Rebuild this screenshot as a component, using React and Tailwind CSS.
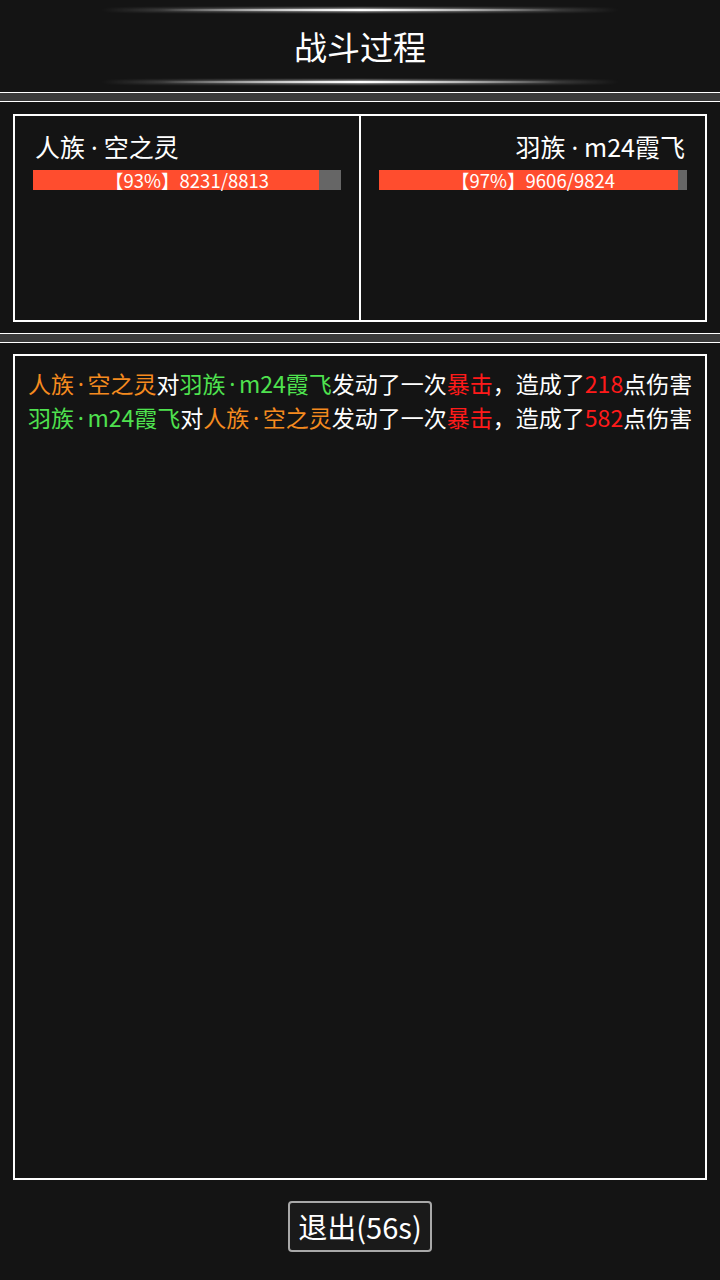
const FONT = { fontFamily: '"Noto Sans CJK SC", "Noto Sans", sans-serif' };

function Dot({ wide }) {
  return (
    <span className={wide ? "mx-[0.24em]" : "mx-[0.16em]"} style={{ fontFamily: '"Noto Sans", sans-serif' }}>
      ·
    </span>
  );
}

function Glow() {
  return (
    <div className="relative mx-auto h-[4px] w-[520px]">
      <div className="absolute inset-0 bg-linear-to-r from-transparent via-white/70 to-transparent blur-[1px]" />
      <div className="absolute inset-x-[60px] top-[1px] h-[2px] bg-linear-to-r from-transparent via-white to-transparent" />
    </div>
  );
}

function Divider() {
  return <div className="h-[10px] border-y border-white bg-[#3a3a3a]" />;
}

function HpBar({ pct, text }) {
  return (
    <div className="relative h-[20px] w-full bg-[#666666]">
      <div className="h-full bg-[#ff4d2e]" style={{ width: pct + "%" }} />
      <div className="absolute inset-0 flex items-center justify-center text-[18.5px] leading-none text-white">
        {text}
      </div>
    </div>
  );
}

function Fighter({ name, pct, hp, right }) {
  return (
    <div className={"flex flex-1 flex-col px-[18px] pt-[14px] " + (right ? "items-end" : "items-start")}>
      <div className="px-[2px] text-[25px] leading-[32px] text-white">{name}</div>
      <div className="mt-[7px] w-full">
        <HpBar pct={pct} text={hp} />
      </div>
    </div>
  );
}

const O = "text-[#f58b1f]";
const G = "text-[#4fe24f]";
const R = "text-[#ff1a1a]";

export default function App() {
  return (
    <div className="flex h-[1280px] w-[720px] flex-col bg-[#141414] text-white" style={FONT}>
      {/* header */}
      <div className="flex h-[92px] flex-col justify-between py-[8px]">
        <Glow />
        <div className="text-center text-[33px] leading-none">战斗过程</div>
        <Glow />
      </div>
      <Divider />

      {/* fighters */}
      <div className="px-[13px] pt-[12px] pb-[11px]">
        <div className="flex h-[208px] border-2 border-white">
          <Fighter name={<>人族<Dot wide />空之灵</>} pct={93} hp="【93%】8231/8813" />
          <div className="w-[2px] bg-white" />
          <Fighter name={<>羽族<Dot wide />m24霞飞</>} pct={97} hp="【97%】9606/9824" right />
        </div>
      </div>
      <Divider />

      {/* log */}
      <div className="flex flex-1 flex-col px-[13px] pt-[11px]">
        <div className="h-[826px] border-2 border-white px-[13px] pt-[11px] text-[23px] leading-[33px]">
          <div className="whitespace-nowrap">
            <span className={O}>人族<Dot />空之灵</span>对<span className={G}>羽族<Dot />m24霞飞</span>发动了一次<span className={R}>暴击</span>，造成了<span className={R}>218</span>点伤害
          </div>
          <div className="whitespace-nowrap">
            <span className={G}>羽族<Dot />m24霞飞</span>对<span className={O}>人族<Dot />空之灵</span>发动了一次<span className={R}>暴击</span>，造成了<span className={R}>582</span>点伤害
          </div>
        </div>
        <div className="flex justify-center pt-[21px]">
          <button className="flex h-[51px] w-[144px] items-center justify-center rounded-[4px] border-2 border-[#a8a8a8] bg-[#1a1a1a] text-[29px] text-white">
            退出(56s)
          </button>
        </div>
      </div>
    </div>
  );
}
